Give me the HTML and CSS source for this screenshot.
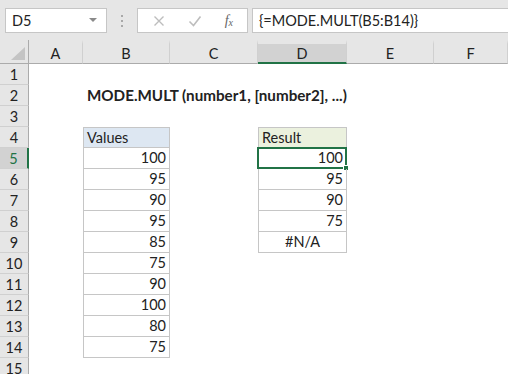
FILE: index.html
```html
<!DOCTYPE html>
<html lang="en">
<head>
  <meta charset="UTF-8" />
  <title>MODE.MULT</title>
  <link rel="stylesheet" href="styles.css">
</head>
<body>

  <div class="bar">
    <div class="namebox">
      <span>D5</span>
      <svg class="caret" width="8" height="5" viewBox="0 0 8 5"><path d="M0 0h8L4 4z" fill="#8a8a8a"/></svg>
    </div>
    <div class="grip"><i></i><i></i><i></i></div>
    <div class="fbuttons">
      <svg width="12" height="12" viewBox="0 0 12 12"><path d="M1.5 1.5l9 9M10.5 1.5l-9 9" stroke="#bdbdbd" stroke-width="1.4"/></svg>
      <svg width="14" height="12" viewBox="0 0 14 12"><path d="M1.5 6.5l4 4 7-9" stroke="#bdbdbd" stroke-width="1.6" fill="none"/></svg>
      <span class="fx">f<sub>x</sub></span>
    </div>
    <div class="formula">{=MODE.MULT(B5:B14)}</div>
  </div>

  <div class="sheet">
    <div class="corner"><svg width="14" height="13" viewBox="0 0 14 13"><path d="M14 0V13H0z" fill="#c4c4c4"/></svg></div>
    <div class="colhead">A</div>
    <div class="colhead">B</div>
    <div class="colhead">C</div>
    <div class="colhead active">D</div>
    <div class="colhead">E</div>
    <div class="colhead">F</div>

    <div class="rowhead">1</div><div></div><div></div><div></div><div></div><div></div><div></div>
    <div class="rowhead">2</div><div></div><div class="title">MODE.MULT (number1, [number2], ...)</div><div></div><div></div><div></div><div></div>
    <div class="rowhead">3</div><div></div><div></div><div></div><div></div><div></div><div></div>
    <div class="rowhead">4</div><div></div><div class="cell top head-blue">Values</div><div></div><div class="cell top head-green">Result</div><div></div><div></div>
    <div class="rowhead active">5</div><div></div><div class="cell num">100</div><div></div><div class="cell num selected">100<span class="handle"></span></div><div></div><div></div>
    <div class="rowhead">6</div><div></div><div class="cell num">95</div><div></div><div class="cell num">95</div><div></div><div></div>
    <div class="rowhead">7</div><div></div><div class="cell num">90</div><div></div><div class="cell num">90</div><div></div><div></div>
    <div class="rowhead">8</div><div></div><div class="cell num">95</div><div></div><div class="cell num">75</div><div></div><div></div>
    <div class="rowhead">9</div><div></div><div class="cell num">85</div><div></div><div class="cell center">#N/A</div><div></div><div></div>
    <div class="rowhead">10</div><div></div><div class="cell num">75</div><div></div><div></div><div></div><div></div>
    <div class="rowhead">11</div><div></div><div class="cell num">90</div><div></div><div></div><div></div><div></div>
    <div class="rowhead">12</div><div></div><div class="cell num">100</div><div></div><div></div><div></div><div></div>
    <div class="rowhead">13</div><div></div><div class="cell num">80</div><div></div><div></div><div></div><div></div>
    <div class="rowhead">14</div><div></div><div class="cell num">75</div><div></div><div></div><div></div><div></div>
    <div class="rowhead">15</div><div></div><div></div><div></div><div></div><div></div><div></div>
  </div>

</body>
</html>
```

FILE: styles.css
```css
* { box-sizing: border-box; }
body {
  margin: 0;
  width: 508px;
  height: 374px;
  overflow: hidden;
  background: #fff;
  font-family: Lato, 'Liberation Sans', sans-serif;
  font-size: 14.5px;
  color: #222;
}

/* formula bar */
.bar {
  height: 40px;
  background: #e6e6e6;
  display: flex;
  align-items: flex-start;
  padding-top: 8px;
  padding-left: 5px;
}
.namebox {
  width: 102px;
  height: 25px;
  background: #fff;
  border: 1px solid #c6c6c6;
  display: flex;
  align-items: center;
  justify-content: space-between;
  padding: 0 9px 0 6px;
}
.grip {
  width: 30px;
  height: 25px;
  display: flex;
  flex-direction: column;
  align-items: center;
  justify-content: center;
  gap: 3px;
}
.grip i { width: 2px; height: 2px; background: #a8a8a8; }
.fbuttons {
  width: 111px;
  height: 25px;
  background: #fff;
  border: 1px solid #c6c6c6;
  display: flex;
  align-items: center;
  justify-content: space-between;
  padding: 0 14px 0 15px;
}
.fx { font-family: 'Liberation Serif', serif; font-style: italic; color: #666; font-size: 14px; }
.fx sub { font-size: 10px; vertical-align: -1px; }
.formula {
  flex: 1;
  height: 25px;
  margin-left: 4px;
  background: #fff;
  border: 1px solid #c6c6c6;
  border-right: none;
  padding: 2px 6px;
  line-height: 20px;
}

/* grid */
.sheet {
  display: grid;
  grid-template-columns: 29px 54px 87px 88px 89px 87px 1fr;
  grid-template-rows: 24px repeat(15, 21px);
}
.corner, .colhead, .rowhead { background: #e6e6e6; }
.corner {
  display: flex;
  align-items: flex-end;
  justify-content: flex-end;
  padding: 0 3px 3px 0;
  border-bottom: 1px solid #ababab;
  border-right: 1px solid #ababab;
}
.colhead {
  text-align: center;
  border-bottom: 1px solid #ababab;
  border-right: 1px solid #d0d0d0;
  border-top: 4px solid #e6e6e6;
  line-height: 19px;
}
.colhead.active { background: #d2d2d2; border-bottom: 2px solid #217346; }
.rowhead {
  text-align: center;
  line-height: 21px;
  border-right: 1px solid #ababab;
  border-bottom: 1px solid #d0d0d0;
}
.rowhead.active { background: #d2d2d2; border-right: 2px solid #217346; color: #217346; }

.title { font-weight: bold; font-size: 15.2px; white-space: nowrap; line-height: 21px; padding-left: 4px; }

.cell {
  position: relative;
  line-height: 20px;
  padding: 0 3px;
  border-left: 1px solid #c6c6c6;
  border-right: 1px solid #c6c6c6;
  border-bottom: 1px solid #c6c6c6;
}
.cell.top { border-top: 1px solid #c6c6c6; line-height: 19px; }
.head-blue { background: #dde7f2; }
.head-green { background: #ebf1de; }
.num { text-align: right; }
.center { text-align: center; }
.selected { border: 2px solid #217346; line-height: 17px; margin: -1px 0 0 -1px; padding-right: 2px; }
.handle {
  position: absolute;
  right: -4px;
  bottom: -4px;
  width: 6px;
  height: 6px;
  background: #217346;
  border: 1px solid #fff;
}
```
